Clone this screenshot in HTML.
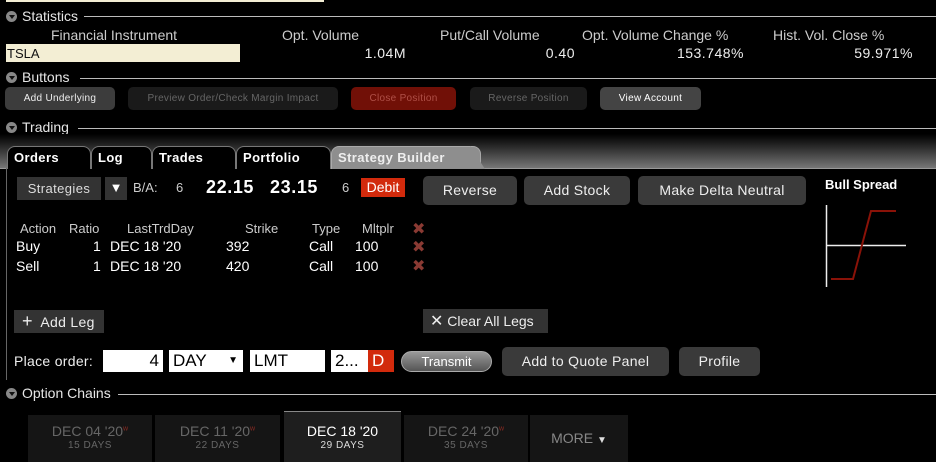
<!DOCTYPE html>
<html><head><meta charset="utf-8"><style>
*{margin:0;padding:0;box-sizing:border-box}
body{width:936px;height:462px;background:#000;position:relative;overflow:hidden;font-family:"Liberation Sans","DejaVu Sans",sans-serif;color:#ddd}
.a{position:absolute;white-space:nowrap}
.hdr{font-size:14px;color:#e6e6e6}
.tri{position:absolute;width:11px;height:11px;border-radius:50%;background:#888}
.tri:after{content:"";position:absolute;left:2.5px;top:3.5px;border-left:3px solid transparent;border-right:3px solid transparent;border-top:4px solid #111}
.line{position:absolute;height:1px;background:#bbb;right:0}
.btn{position:absolute;border-radius:5px;font-size:10px;text-align:center;letter-spacing:0.3px}
.b2{position:absolute;background:#3a3a3a;border-radius:5px;color:#eee;font-size:14px;text-align:center;letter-spacing:0.3px}
.tab{position:absolute;top:146px;height:23px;border:1px solid #777;border-bottom:none;border-radius:8px 8px 0 0;background:#000;color:#fff;font-weight:bold;font-size:13px;padding:3px 0 0 6px;letter-spacing:0.4px}
.x{position:absolute;color:#8a3a33;font-weight:bold;font-size:16px}
.inp{position:absolute;background:#fff;color:#000;font-size:17px;height:22px;top:350px;padding:0 4px;line-height:22px}
.dt{position:absolute;top:415px;height:47px;background:#151515;text-align:center;color:#666;font-size:14px;padding-top:8px}
.dt small{display:block;font-size:10px;margin-top:1px;letter-spacing:0.5px}
.dt sup{color:#8a2a22;font-size:7px}
</style></head><body>
<div class="a" style="left:6px;top:0;width:318px;height:2px;background:#f3eed4"></div>

<div class="tri" style="left:6px;top:11px"></div>
<div class="a hdr" style="left:22px;top:8px">Statistics</div>
<div class="line" style="left:84px;top:16px"></div>
<div class="a" style="left:0;top:27px;font-size:14px;color:#ccc;width:936px">
<span class="a" style="left:51px">Financial Instrument</span>
<span class="a" style="left:282px">Opt. Volume</span>
<span class="a" style="left:440px">Put/Call Volume</span>
<span class="a" style="left:582px">Opt. Volume Change %</span>
<span class="a" style="left:773px">Hist. Vol. Close %</span>
</div>
<div class="a" style="left:6px;top:44px;width:234px;height:18px;background:#f3eed4;color:#111;font-size:13px;padding:2px 0 0 1px">TSLA</div>
<div class="a" style="top:45px;font-size:14px;color:#eee;left:0;width:936px;letter-spacing:0.5px">
<span class="a" style="right:530px">1.04M</span>
<span class="a" style="right:361px">0.40</span>
<span class="a" style="right:192px">153.748%</span>
<span class="a" style="right:23px">59.971%</span>
</div>

<div class="tri" style="left:6px;top:72px"></div>
<div class="a hdr" style="left:22px;top:69px">Buttons</div>
<div class="line" style="left:80px;top:78px"></div>
<div class="btn" style="left:5px;top:87px;width:110px;height:23px;background:#3c3c3c;color:#eee;line-height:23px">Add Underlying</div>
<div class="btn" style="left:128px;top:87px;width:210px;height:23px;background:#1a1a1a;color:#666;line-height:23px">Preview Order/Check Margin Impact</div>
<div class="btn" style="left:351px;top:87px;width:105px;height:23px;background:#711007;color:#b05048;line-height:23px">Close Position</div>
<div class="btn" style="left:470px;top:87px;width:117px;height:23px;background:#1a1a1a;color:#666;line-height:23px">Reverse Position</div>
<div class="btn" style="left:600px;top:87px;width:101px;height:23px;background:#444;color:#fff;line-height:23px">View Account</div>

<div class="tri" style="left:6px;top:122px"></div>
<div class="a hdr" style="left:22px;top:119px">Trading</div>
<div class="line" style="left:78px;top:128px"></div>

<div class="a" style="left:0;top:134px;width:936px;height:35px;background:linear-gradient(#000 0%,#222 30%,#7a7a7a 100%)"></div>
<div class="a" style="left:0;top:168px;width:936px;height:1px;background:#999"></div>
<div class="a" style="left:6px;top:168px;width:1px;height:212px;background:#666"></div>
<div class="tab" style="left:7px;width:84px">Orders</div>
<div class="tab" style="left:91px;width:61px">Log</div>
<div class="tab" style="left:152px;width:84px">Trades</div>
<div class="tab" style="left:236px;width:95px">Portfolio</div>
<div class="tab" style="left:331px;width:150px;background:#8e8e8e;border-color:#aaa;color:#eee">Strategy Builder</div>
<div class="a" style="left:470px;top:146px;width:0;height:0;border-left:15px solid #8e8e8e;border-top:23px solid transparent"></div>

<div class="a" style="left:17px;top:177px;width:84px;height:23px;background:#333;color:#ddd;font-size:13px;line-height:23px;text-align:center;letter-spacing:0.4px">Strategies</div>
<div class="a" style="left:105px;top:177px;width:22px;height:23px;background:#333;color:#fff;font-size:13px;line-height:22px;text-align:center">▼</div>
<div class="a" style="left:133px;top:180px;font-size:13px;color:#ccc">B/A:</div>
<div class="a" style="left:176px;top:180px;font-size:13px;color:#ccc">6</div>
<div class="a" style="left:206px;top:177px;font-size:18px;font-weight:bold;color:#fff;letter-spacing:0.6px">22.15</div>
<div class="a" style="left:270px;top:177px;font-size:18px;font-weight:bold;color:#fff;letter-spacing:0.6px">23.15</div>
<div class="a" style="left:342px;top:180px;font-size:13px;color:#ccc">6</div>
<div class="a" style="left:361px;top:178px;width:44px;height:19px;background:#d22a0c;color:#fff;font-size:14px;text-align:center;line-height:19px">Debit</div>
<div class="b2" style="left:423px;top:176px;width:94px;height:29px;line-height:29px">Reverse</div>
<div class="b2" style="left:524px;top:176px;width:106px;height:29px;line-height:29px">Add Stock</div>
<div class="b2" style="left:638px;top:176px;width:168px;height:29px;line-height:29px">Make Delta Neutral</div>
<div class="a" style="left:825px;top:177px;font-size:13px;font-weight:bold;color:#fff">Bull Spread</div>
<svg class="a" style="left:820px;top:200px" width="90" height="90">
<line x1="6.5" y1="5" x2="6.5" y2="87" stroke="#eee" stroke-width="1.5"/>
<line x1="6" y1="45.5" x2="86" y2="45.5" stroke="#eee" stroke-width="1.5"/>
<polyline points="11,79 33,79 51,11 76,11" fill="none" stroke="#8a1208" stroke-width="2"/>
</svg>

<div class="a" style="top:221px;left:0;font-size:13px;color:#ccc;width:450px;height:60px">
<span class="a" style="left:20px">Action</span><span class="a" style="left:69px">Ratio</span><span class="a" style="left:127px">LastTrdDay</span><span class="a" style="left:245px">Strike</span><span class="a" style="left:312px">Type</span><span class="a" style="left:362px">Mltplr</span>
</div>
<div class="a" style="top:238px;left:0;font-size:14px;color:#fff;width:450px">
<span class="a" style="left:16px">Buy</span><span class="a" style="left:93px">1</span><span class="a" style="left:110px">DEC 18 '20</span><span class="a" style="left:226px">392</span><span class="a" style="left:309px">Call</span><span class="a" style="left:355px">100</span>
</div>
<div class="a" style="top:258px;left:0;font-size:14px;color:#fff;width:450px">
<span class="a" style="left:16px">Sell</span><span class="a" style="left:93px">1</span><span class="a" style="left:110px">DEC 18 '20</span><span class="a" style="left:226px">420</span><span class="a" style="left:309px">Call</span><span class="a" style="left:355px">100</span>
</div>
<div class="x" style="left:412px;top:219px">✖</div>
<div class="x" style="left:412px;top:237px">✖</div>
<div class="x" style="left:412px;top:256px">✖</div>

<div class="a" style="left:14px;top:310px;width:90px;height:23px;background:#333;color:#eee;font-size:14px;line-height:23px;padding-left:8px;letter-spacing:0.3px"><b style="font-size:18px;font-weight:normal">+</b>&nbsp; Add Leg</div>
<div class="a" style="left:423px;top:309px;width:125px;height:24px;background:#333;color:#eee;font-size:14px;line-height:24px;padding-left:7px"><span style="font-size:16px">✕</span> Clear All Legs</div>

<div class="a" style="left:14px;top:353px;font-size:14px;color:#eee;letter-spacing:0.3px">Place order:</div>
<div class="inp" style="left:103px;width:60px;text-align:right">4</div>
<div class="inp" style="left:169px;width:74px">DAY<span style="position:absolute;right:5px;font-size:10px">▼</span></div>
<div class="inp" style="left:250px;width:75px">LMT</div>
<div class="inp" style="left:331px;width:38px">2...</div>
<div class="inp" style="left:368px;width:26px;background:#d22a0c;color:#fff">D</div>
<div class="a" style="left:401px;top:351px;width:91px;height:21px;border-radius:11px;background:linear-gradient(#999,#555);border:1px solid #aaa;color:#fff;font-size:13px;text-align:center;line-height:20px">Transmit</div>
<div class="b2" style="left:502px;top:347px;width:167px;height:29px;line-height:29px">Add to Quote Panel</div>
<div class="b2" style="left:679px;top:347px;width:81px;height:29px;line-height:29px">Profile</div>

<div class="tri" style="left:6px;top:388px"></div>
<div class="a hdr" style="left:22px;top:385px">Option Chains</div>
<div class="line" style="left:118px;top:394px"></div>

<div class="dt" style="left:28px;width:124px">DEC 04 '20<sup>w</sup><small>15 DAYS</small></div>
<div class="dt" style="left:155px;width:125px">DEC 11 '20<sup>w</sup><small>22 DAYS</small></div>
<div class="dt" style="left:284px;width:117px;top:411px;height:51px;background:#1e1e1e;border-top:1px solid #888;color:#fff;padding-top:11px">DEC 18 '20<small style="color:#ddd">29 DAYS</small></div>
<div class="dt" style="left:404px;width:124px">DEC 24 '20<sup>w</sup><small>35 DAYS</small></div>
<div class="dt" style="left:530px;width:98px;padding-top:15px;color:#888">MORE <span style="font-size:10px;color:#ddd">▼</span></div>
</body></html>
